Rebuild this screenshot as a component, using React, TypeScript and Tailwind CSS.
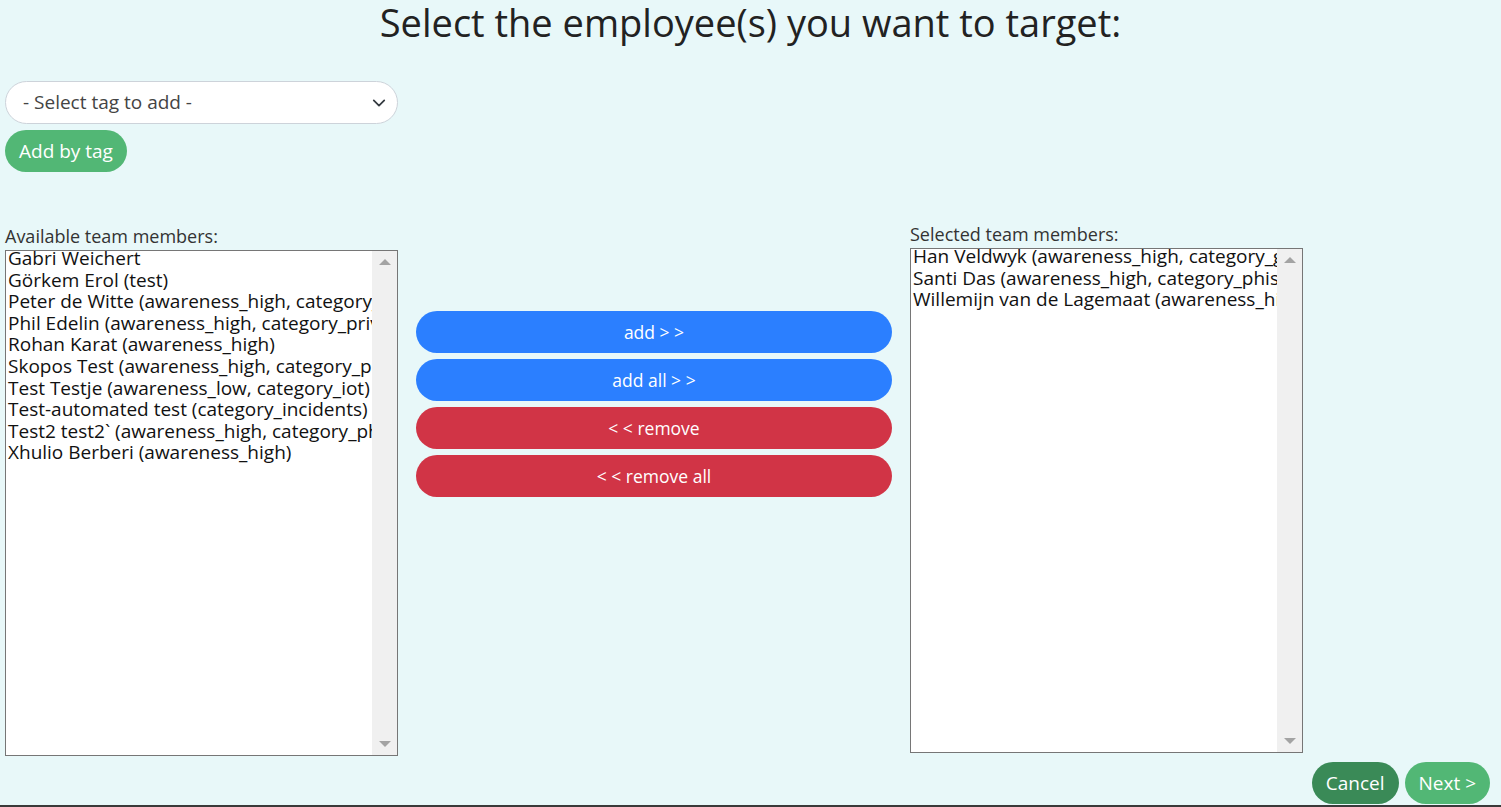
import React from "react";

const available = [
  "Gabri Weichert",
  "Görkem Erol (test)",
  "Peter de Witte (awareness_high, category_privacy)",
  "Phil Edelin (awareness_high, category_privacy)",
  "Rohan Karat (awareness_high)",
  "Skopos Test (awareness_high, category_privacy)",
  "Test Testje (awareness_low, category_iot)",
  "Test-automated test (category_incidents)",
  "Test2 test2` (awareness_high, category_phishing)",
  "Xhulio Berberi (awareness_high)",
];

const selected = [
  "Han Veldwyk (awareness_high, category_general)",
  "Santi Das (awareness_high, category_phishing)",
  "Willemijn van de Lagemaat (awareness_high)",
];

function ListBox({ items, h }: { items: string[]; h: string }) {
  return (
    <div className={`flex w-[393px] ${h} border border-[#767676] bg-white`}>
      <div className="flex-1 overflow-hidden pl-[2px]">
        <div className="-mt-[3px]">
          {items.map((t) => (
            <div key={t} className="h-[21.6px] whitespace-nowrap text-[19px] leading-[21.6px] text-[#111]">
              {t}
            </div>
          ))}
        </div>
      </div>
      <div className="flex w-[25px] flex-col items-center justify-between bg-[#f0f0f0] py-[8px]">
        <div className="h-0 w-0 border-x-[6px] border-b-[6px] border-x-transparent border-b-[#a3a3a3]" />
        <div className="h-0 w-0 border-x-[6px] border-t-[6px] border-x-transparent border-t-[#a3a3a3]" />
      </div>
    </div>
  );
}

export default function App() {
  return (
    <div
      className="relative flex h-[807px] w-[1501px] flex-col bg-[#e8f8f9] text-[#212529]"
      style={{ fontFamily: "'Open Sans', 'Noto Sans', sans-serif" }}
    >
      <h1 className="h-[48px] text-center text-[38px] font-normal leading-[44px] text-[#222]">
        Select the employee(s) you want to target:
      </h1>
      <div className="mt-[33px] flex flex-col items-start pl-[5px]">
        <div className="flex h-[43px] w-[393px] items-center justify-between rounded-full border border-[#cdd3da] bg-white pl-[17px] pr-[11px]">
          <span className="text-[19px] text-[#444]">- Select tag to add -</span>
          <svg width="14" height="14" viewBox="0 0 16 16">
            <path d="M2 5l6 6 6-6" fill="none" stroke="#343a40" strokeWidth="2" strokeLinecap="round" strokeLinejoin="round" />
          </svg>
        </div>
        <button className="mt-[6px] flex h-[42px] items-center rounded-full bg-[#52b775] px-[14px] text-[19px] text-white">
          Add by tag
        </button>
      </div>
      <div className="mt-[54px] flex items-start pl-[5px]">
        <div className="flex flex-col pt-[2px]">
          <div className="mb-[6px] text-[18px] leading-[16px] text-[#333]">Available team members:</div>
          <ListBox items={available} h="h-[506px]" />
        </div>
        <div className="ml-[18px] mt-[85px] flex w-[476px] flex-col gap-[6px]">
          <button className="h-[42px] rounded-full bg-[#2b7fff] text-[17.5px] text-white">add &gt; &gt;</button>
          <button className="h-[42px] rounded-full bg-[#2b7fff] text-[17.5px] text-white">add all &gt; &gt;</button>
          <button className="h-[42px] rounded-full bg-[#d13446] text-[17.5px] text-white">&lt; &lt; remove</button>
          <button className="h-[42px] rounded-full bg-[#d13446] text-[17.5px] text-white">&lt; &lt; remove all</button>
        </div>
        <div className="ml-[18px] flex flex-col">
          <div className="mb-[6px] text-[18px] leading-[16px] text-[#333]">Selected team members:</div>
          <ListBox items={selected} h="h-[505px]" />
        </div>
      </div>
      <div className="mt-[6px] flex justify-end gap-[6px] pr-[11px]">
        <button className="h-[42px] rounded-full bg-[#3a8a57] px-[14px] text-[19px] text-white">Cancel</button>
        <button className="h-[42px] rounded-full bg-[#52b775] px-[14px] text-[19px] text-white">Next &gt;</button>
      </div>
      <div className="absolute bottom-0 left-0 h-[2px] w-full bg-[#3a3a3a]" />
    </div>
  );
}
